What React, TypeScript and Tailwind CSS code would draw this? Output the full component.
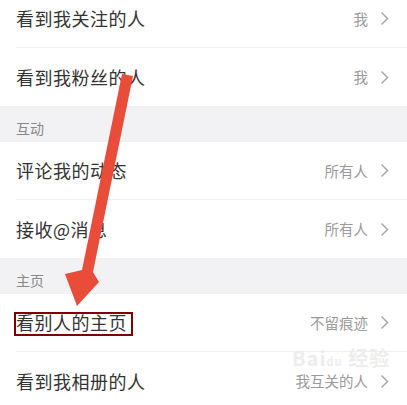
import React from "react";

type Row = { label: string; value: string };

const GROUPS: { title?: string; rows: Row[] }[] = [
  {
    rows: [
      { label: "看到我关注的人", value: "我" },
      { label: "看到我粉丝的人", value: "我" },
    ],
  },
  {
    title: "互动",
    rows: [
      { label: "评论我的动态", value: "所有人" },
      { label: "接收@消息", value: "所有人" },
    ],
  },
  {
    title: "主页",
    rows: [
      { label: "看别人的主页", value: "不留痕迹" },
      { label: "看到我相册的人", value: "我互关的人" },
    ],
  },
];

function Chevron() {
  return (
    <svg width="9" height="15" viewBox="0 0 9 15" className="shrink-0">
      <path d="M1.5 1.5 L7.5 7.5 L1.5 13.5" fill="none" stroke="#a8a8a8" strokeWidth="1.5" />
    </svg>
  );
}

function SettingRow({ row, last }: { row: Row; last: boolean }) {
  return (
    <div className="pl-4">
      <div
        className={
          "h-[58px] flex items-center justify-between pr-[18px] " +
          (last ? "" : "border-b border-[#eeeeee]")
        }
      >
        <span className="text-[18px] text-[#333333] tracking-[0.5px]">{row.label}</span>
        <div className="flex items-center gap-[12px]">
          <span className="text-[14.5px] text-[#9a9a9a]">{row.value}</span>
          <Chevron />
        </div>
      </div>
    </div>
  );
}

export default function App() {
  return (
    <div
      className="relative w-[407px] h-[405px] overflow-hidden bg-white"
      style={{ fontFamily: '"Noto Sans CJK SC", "Noto Sans", sans-serif' }}
    >
      <div className="-mt-[10px]">
        {GROUPS.map((g, gi) => (
          <div key={gi}>
            {g.title && (
              <div className="h-[36px] bg-[#f2f2f5] pl-4 flex items-center pt-[8px]">
                <span className="text-[14px] text-[#888888]">{g.title}</span>
              </div>
            )}
            {g.rows.map((r, ri) => (
              <SettingRow key={r.label} row={r} last={ri === g.rows.length - 1} />
            ))}
          </div>
        ))}
      </div>

      {/* highlight box */}
      <div className="absolute left-[14px] top-[312px] w-[119px] h-[24px] border-[2.5px] border-[#7f0000]" />

      {/* faint watermark */}
      <div className="absolute left-[292px] top-[348px] text-[20px] font-bold text-[#ededed] tracking-[1px] leading-none">
        Bai<span className="text-[11px]">du</span> 经验
      </div>

      {/* red arrow */}
      <svg className="absolute left-0 top-0" width="407" height="405" viewBox="0 0 407 405">
        <path d="M122 74 L133 76 L93 272 L99 282 L77 306 L65 274 L82 270 Z" fill="#ea4c3a" />
      </svg>
    </div>
  );
}
